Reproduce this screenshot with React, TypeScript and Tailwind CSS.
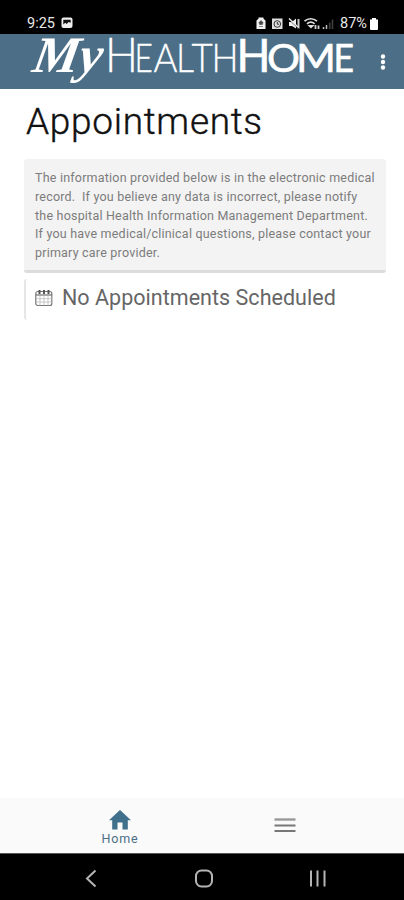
const notice = [
  "The information provided below is in the electronic medical",
  "record.  If you believe any data is incorrect, please notify",
  "the hospital Health Information Management Department.",
  "If you have medical/clinical questions, please contact your",
  "primary care provider.",
];

// Small caps wordmark, each letter fitted to its own width
const light = [
  { char: "H", x: 105, width: 33, size: 47 },
  { char: "E", x: 134.6, width: 18.4, size: 39.5 },
  { char: "A", x: 153.6, width: 24, size: 39.5 },
  { char: "L", x: 176, width: 18, size: 39.5 },
  { char: "T", x: 191.4, width: 21.3, size: 39.5 },
  { char: "H", x: 211.4, width: 27, size: 39.5 },
];

const strong = [
  { char: "H", x: 236.6, width: 34, size: 46.5 },
  { char: "O", x: 267, width: 33, size: 39 },
  { char: "M", x: 296, width: 40, size: 39 },
  { char: "E", x: 333.6, width: 20.5, size: 39 },
];

function StatusIcons() {
  return (
    <svg width="80" height="14" viewBox="0 0 80 14" className="block">
      {/* Battery saver */}
      <path d="M1.5 4.5 3.5 2.8V1.5h5v1.3l2 1.7V13h-9z" fill="#f1f1f1" />
      <path d="M6 4.5 8.3 7H7.4v1.5H4.6V7h-.9zM4 10.5h4" fill="#444" stroke="#444" strokeWidth=".6" />
      {/* Alarm */}
      <path d="M17 2.5h10.5v10.5H17z" fill="#dedede" />
      <circle cx="22.3" cy="8" r="3.3" fill="none" stroke="#333" strokeWidth="1" />
      <path d="M22.3 6v2.2H24" fill="none" stroke="#333" strokeWidth="1" />
      {/* Muted */}
      <path d="M34 6h3l4-3.5v10L37 10h-3z" fill="#eee" />
      <path d="M43.5 3v9.5" stroke="#ccc" strokeWidth="2" />
      <path d="m33.5 3 10 9.5" stroke="#111" strokeWidth="1" />
      <path d="m34 2.5 9.5 9" stroke="#eee" strokeWidth="1.3" />
      {/* Wifi */}
      <g fill="none" stroke="#ddd" strokeWidth="1.7">
        <path d="M49.5 5.2c3.6-3.3 8.9-3.3 12.5 0" />
        <path d="M52 7.8c2.3-2.1 5.3-2.1 7.6 0" />
        <path d="m54.5 9.9 1.5 1.5 1.5-1.5z" fill="#ddd" />
      </g>
      <path d="M60.5 9v4M63.5 9.5v3.5" stroke="#ccc" strokeWidth="1.8" />
      {/* Signal */}
      <path d="M68.5 11v2M71.5 9v4" stroke="#bbb" strokeWidth="1.5" />
      <path d="M74.7 6.5V13M77.5 3.5V13" stroke="#3f3f3f" strokeWidth="1.6" />
    </svg>
  );
}

function StatusBar() {
  return (
    <div className="flex h-[34px] items-start bg-black pl-[27px] pt-[15px] text-[#e8e8e8]">
      <span className="w-[34px] text-[14.5px] leading-[17px]">9:25</span>
      <svg width="12" height="12" viewBox="0 0 12 12" className="mt-[2px]">
        <rect x=".5" y=".5" width="11" height="10.5" rx="2" fill="#eee" />
        <path d="M2.3 2.8h7.4v3L7.6 4.9 5.7 7 4.2 5.8 2.3 7.5z" fill="#111" />
      </svg>
      <div className="ml-[182px] mt-px">
        <StatusIcons />
      </div>
      <span className="ml-[5px] w-[29px] text-[14.5px] leading-[17px]">87%</span>
      <svg width="10" height="13" viewBox="0 0 10 13" className="mt-[2px]">
        <path d="M3 1h4v1.5h2V12q0 1-1 1H2q-1 0-1-1V2.5h2z" fill="#fff" />
      </svg>
    </div>
  );
}

function Wordmark() {
  return (
    <svg width="330" height="55" viewBox="27 34 330 55" fill="#fff" className="block overflow-visible">
      <text
        transform="translate(31 71.5) skewX(-10)"
        fontSize="51"
        fontWeight="700"
        fontStyle="italic"
        textLength="69"
        lengthAdjust="spacingAndGlyphs"
        className="font-['Liberation_Serif',serif]"
      >
        My
      </text>
      <g fontWeight="300" stroke="#fff" strokeWidth=".3" className="font-[Lato,sans-serif]">
        {light.map((l) => (
          <text key={l.x} x={l.x} y="72" fontSize={l.size} textLength={l.width} lengthAdjust="spacingAndGlyphs">
            {l.char}
          </text>
        ))}
      </g>
      <g fontWeight="400" stroke="#fff" strokeWidth=".6" className="font-[Lato,sans-serif]">
        {strong.map((l) => (
          <text key={l.x} x={l.x} y="72" fontSize={l.size} textLength={l.width} lengthAdjust="spacingAndGlyphs">
            {l.char}
          </text>
        ))}
      </g>
    </svg>
  );
}

function Header() {
  return (
    <header className="flex h-[55px] items-center bg-[#4c6f87] pl-[27px]">
      <Wordmark />
      <svg width="6" height="18" viewBox="0 0 6 18" fill="#fff" className="ml-[23px]">
        <circle cx="3" cy="3.5" r="2.2" />
        <circle cx="3" cy="9" r="2.2" />
        <circle cx="3" cy="14.5" r="2.2" />
      </svg>
    </header>
  );
}

function CalendarIcon() {
  return (
    <svg width="18" height="18" viewBox="0 0 18 18" fill="none" stroke="#777" className="shrink-0">
      <rect x=".8" y="2.5" width="16" height="14" rx="2" strokeWidth="1.2" />
      <path d="M1 6h16" strokeWidth="1.3" />
      <path d="M1 9.7h16M1 13h16M5 6.5v10M9 6.5v10M13 6.5v10" stroke="#bbb" strokeWidth=".8" />
      <path d="M4.5 1v4M9 1v4M13.5 1v4" stroke="#555" strokeWidth="2" />
    </svg>
  );
}

function TabBar() {
  return (
    <nav className="flex h-[56px] border-b border-[#555] bg-[#fafafa]">
      <div className="flex w-[240px] flex-col items-center pt-[12px] text-[#4c6f87]">
        <svg width="22" height="20" viewBox="0 0 22 20" fill="#40708c">
          <path d="M11 0 22 10.2h-3.2V19.5h-5.3v-7h-5v7H3.2v-9.3H0z" />
        </svg>
        <span className="mt-px text-[12.5px] leading-[16px] tracking-[0.8px]">Home</span>
      </div>
      <svg width="22" height="16" viewBox="0 0 22 16" className="ml-[34px] mt-[19px]">
        <path d="M.5 2.5h21" stroke="#999" strokeWidth="2.4" />
        <path d="M.5 8.5h21M.5 14h21" stroke="#777" strokeWidth="1.9" />
      </svg>
    </nav>
  );
}

function SystemNav() {
  return (
    <div className="h-[46px] bg-black">
      <svg width="404" height="46" viewBox="0 0 404 46" fill="none" stroke="#b5b5b5" strokeWidth="2" className="block">
        <path d="m95.5 16.5-8.5 8 8.5 8" />
        <rect x="196" y="16.5" width="16" height="16" rx="5.5" />
        <path d="M311 16.5v16M317.5 16.5v16M324.5 16.5v16" />
      </svg>
    </div>
  );
}

export default function App() {
  return (
    <div className="flex h-[900px] w-[404px] flex-col overflow-hidden bg-white font-[Roboto,sans-serif]">
      <StatusBar />
      <Header />
      <main className="flex-1 pl-[24px] pr-[18px] pt-[10px]">
        <h1 className="pl-[2px] text-[37px] leading-[46px] font-light tracking-[0.7px] text-[#111] [-webkit-text-stroke:0.4px_#111]">
          Appointments
        </h1>
        <section className="mt-[14px] h-[114px] rounded-[3px] border-b-3 border-[#dcdcdc] bg-[#f3f3f3] pl-[11px] pt-[10.4px] text-[12.5px] leading-[18.6px] tracking-[0.21px] text-[#7c7c7c]">
          {notice.map((line) => (
            <p key={line} className="whitespace-pre">{line}</p>
          ))}
        </section>
        <section className="mt-[6px] flex h-[41px] items-center rounded-[3px] border-l-2 border-[#e6e6e6] pl-[9px] pb-[3px]">
          <CalendarIcon />
          <span className="ml-[9px] text-[21.5px] tracking-[0.03px] text-[#666]">No Appointments Scheduled</span>
        </section>
      </main>
      <TabBar />
      <SystemNav />
    </div>
  );
}
